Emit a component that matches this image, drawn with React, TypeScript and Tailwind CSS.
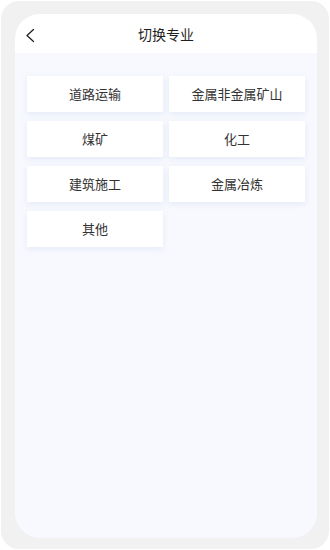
const MAJORS = ['道路运输', '金属非金属矿山', '煤矿', '化工', '建筑施工', '金属冶炼', '其他'];

export default function App() {
  return (
    <div className="h-[550px] w-[330px] bg-white p-px font-['Noto_Sans_CJK_SC','Noto_Sans',sans-serif]">
      {/* device frame */}
      <div className="flex h-full w-full flex-col rounded-[18px] bg-[#f1f1f1] pb-[11px] pl-[14px] pr-[12px] pt-[13px]">
        {/* screen */}
        <div className="flex flex-1 flex-col overflow-hidden rounded-[25px] bg-[#f8f9fe]">
          <div className="relative flex h-[39px] shrink-0 items-center justify-center bg-white">
            <svg className="absolute left-[10px] top-[14px]" width="10" height="15" viewBox="0 0 10 15" fill="none">
              <path d="M8.5 1.5L2 7.5l6.5 6" stroke="#222" strokeWidth="1.3" strokeLinecap="round" strokeLinejoin="round" />
            </svg>
            <h1 className="text-[14px] font-normal leading-none text-[#1f1f1f]">切换专业</h1>
          </div>

          <div className="grid grid-cols-2 gap-x-[6px] gap-y-[9px] px-[12px] pt-[23px]">
            {MAJORS.map((m) => (
              <div
                key={m}
                className="flex h-[36px] items-center justify-center bg-white text-[13px] text-[#333] shadow-[0_2px_6px_rgba(190,205,235,0.35)]"
              >
                {m}
              </div>
            ))}
          </div>
        </div>
      </div>
    </div>
  );
}
